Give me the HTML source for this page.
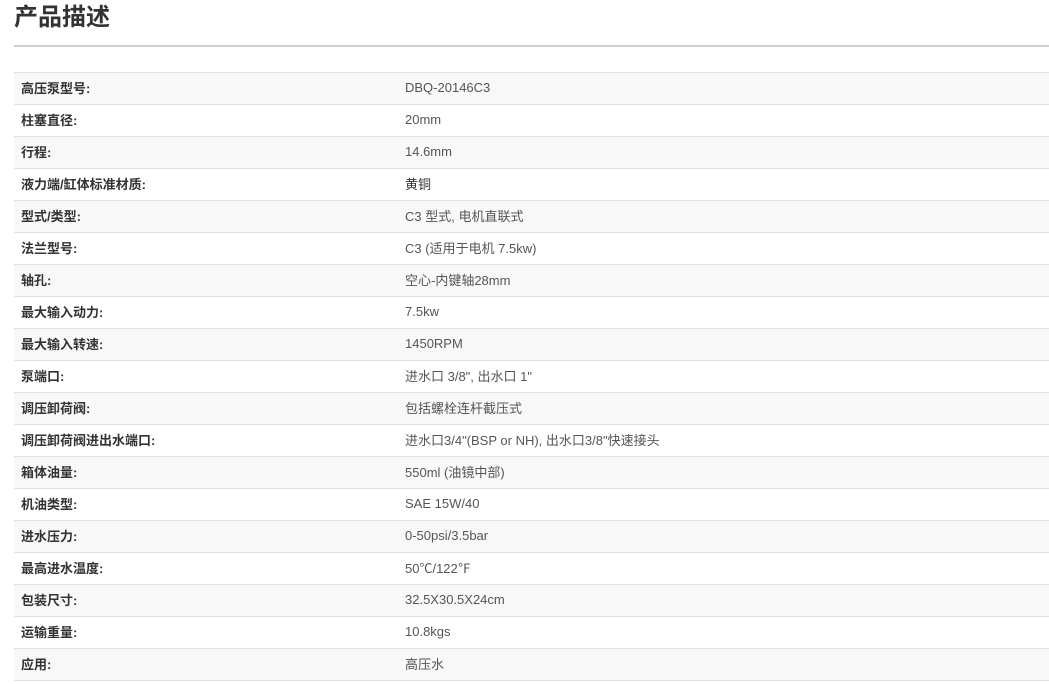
<!DOCTYPE html>
<html><head><meta charset="utf-8"><style>
body{margin:0;background:#fff;font-family:"Liberation Sans","Noto Sans CJK SC",sans-serif;width:1049px;height:684px;overflow:hidden}
h2{position:absolute;left:14px;top:2px;margin:0;font-size:24px;line-height:32px;font-weight:bold;color:#333}
.hr{position:absolute;left:14px;right:0;top:45px;height:2px;background:#cfcfcf}
table{position:absolute;left:14px;top:72px;width:1035px;border-collapse:collapse;font-size:13px}
td{height:29px;padding:0 0 2px 0;border-top:1px solid #e2e2e2;border-bottom:1px solid #e2e2e2;vertical-align:middle}
tr:nth-child(odd) td{background:#f8f8f8}
td.l{padding-left:7px;width:384px;font-weight:bold;color:#333}
td.v{color:#555}
</style></head><body>
<h2>产品描述</h2><div class="hr"></div>
<table>
<tr><td class="l">高压泵型号:</td><td class="v">DBQ-20146C3</td></tr>
<tr><td class="l">柱塞直径:</td><td class="v">20mm</td></tr>
<tr><td class="l">行程:</td><td class="v">14.6mm</td></tr>
<tr><td class="l">液力端/缸体标准材质:</td><td class="v" style="color:#333">黄铜</td></tr>
<tr><td class="l">型式/类型:</td><td class="v">C3 型式, 电机直联式</td></tr>
<tr><td class="l">法兰型号:</td><td class="v">C3 (适用于电机 7.5kw)</td></tr>
<tr><td class="l">轴孔:</td><td class="v">空心-内键轴28mm</td></tr>
<tr><td class="l">最大输入动力:</td><td class="v">7.5kw</td></tr>
<tr><td class="l">最大输入转速:</td><td class="v">1450RPM</td></tr>
<tr><td class="l">泵端口:</td><td class="v">进水口 3/8", 出水口 1"</td></tr>
<tr><td class="l">调压卸荷阀:</td><td class="v">包括螺栓连杆截压式</td></tr>
<tr><td class="l">调压卸荷阀进出水端口:</td><td class="v">进水口3/4"(BSP or NH), 出水口3/8"快速接头</td></tr>
<tr><td class="l">箱体油量:</td><td class="v">550ml (油镜中部)</td></tr>
<tr><td class="l">机油类型:</td><td class="v">SAE 15W/40</td></tr>
<tr><td class="l">进水压力:</td><td class="v">0-50psi/3.5bar</td></tr>
<tr><td class="l">最高进水温度:</td><td class="v">50℃/122℉</td></tr>
<tr><td class="l">包装尺寸:</td><td class="v">32.5X30.5X24cm</td></tr>
<tr><td class="l">运输重量:</td><td class="v">10.8kgs</td></tr>
<tr><td class="l">应用:</td><td class="v">高压水</td></tr>
</table>
</body></html>
